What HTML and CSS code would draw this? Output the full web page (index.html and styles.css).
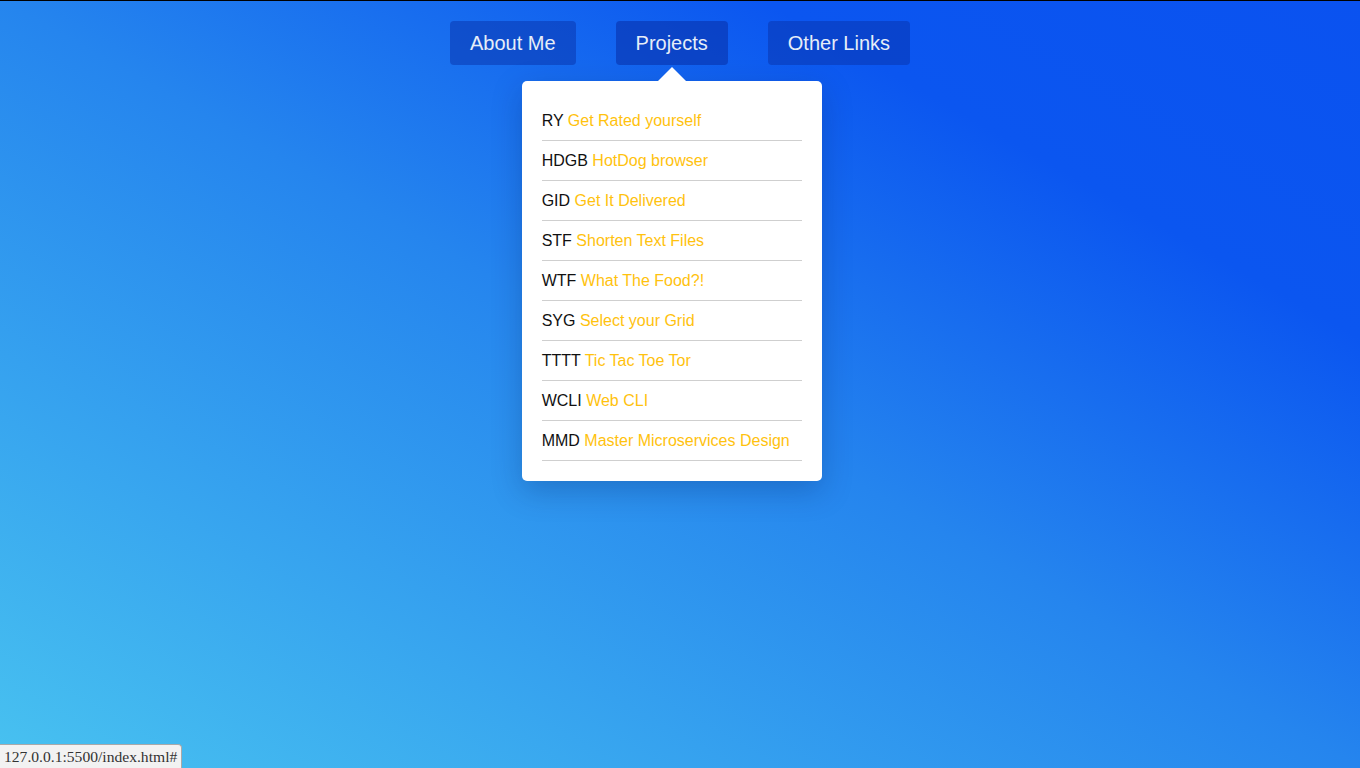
FILE: index.html
```html
<!DOCTYPE html>
<html lang="en">
<head>
<meta charset="utf-8">
<title>Projects</title>
<link rel="stylesheet" href="styles.css">
</head>
<body>
<nav class="nav">
  <div class="nav-item"><a class="nav-btn" href="#">About Me</a></div>
  <div class="nav-item open">
    <a class="nav-btn active" href="#">Projects</a>
    <div class="dropdown">
      <ul class="list">
        <li><span class="code">RY</span> <span class="name">Get Rated yourself</span></li>
        <li><span class="code">HDGB</span> <span class="name">HotDog browser</span></li>
        <li><span class="code">GID</span> <span class="name">Get It Delivered</span></li>
        <li><span class="code">STF</span> <span class="name">Shorten Text Files</span></li>
        <li><span class="code">WTF</span> <span class="name">What The Food?!</span></li>
        <li><span class="code">SYG</span> <span class="name">Select your Grid</span></li>
        <li><span class="code">TTTT</span> <span class="name">Tic Tac Toe Tor</span></li>
        <li><span class="code">WCLI</span> <span class="name">Web CLI</span></li>
        <li><span class="code">MMD</span> <span class="name">Master Microservices Design</span></li>
      </ul>
    </div>
  </div>
  <div class="nav-item"><a class="nav-btn" href="#">Other Links</a></div>
</nav>
<div class="status">127.0.0.1:5500/index.html#</div>
</body>
</html>
```
FILE: styles.css
```css
html, body {
  margin: 0;
  padding: 0;
  height: 100%;
}
body {
  border-top: 1px solid #000;
  box-sizing: border-box;
  min-height: 768px;
  background: linear-gradient(to top right, #48c2f0 0%, #2585ee 50%, #0b56f0 78%, #0a52f0 100%);
  font-family: "Liberation Sans", Arial, sans-serif;
  overflow: hidden;
}
.nav {
  display: flex;
  justify-content: center;
  gap: 40px;
  padding-top: 20px;
}
.nav-item {
  position: relative;
}
.nav-btn {
  display: block;
  height: 44px;
  line-height: 44px;
  padding: 0 20px;
  font-size: 20px;
  color: #e6edf8;
  text-decoration: none;
  background: rgba(8, 50, 170, 0.5);
  border-radius: 4px;
}
.nav-btn.active {
  background: rgba(8, 45, 165, 0.55);
}
.dropdown {
  position: absolute;
  top: 60px;
  left: 50%;
  transform: translateX(-50%);
  width: 300px;
  box-sizing: border-box;
  padding: 20px;
  background: #fff;
  border-radius: 5px;
  box-shadow: 0 10px 30px rgba(0, 30, 90, 0.25);
}
.dropdown::before {
  content: "";
  position: absolute;
  top: -14px;
  left: 50%;
  margin-left: -14px;
  border-left: 14px solid transparent;
  border-right: 14px solid transparent;
  border-bottom: 14px solid #fff;
}
.list {
  list-style: none;
  margin: 0;
  padding: 0;
}
.list li {
  height: 39px;
  line-height: 39px;
  border-bottom: 1px solid #cfcfcf;
  font-size: 16px;
  white-space: nowrap;
}
.code {
  color: #111;
}
.name {
  color: #ffc20e;
}
.status {
  position: fixed;
  left: 0;
  bottom: 0;
  height: 23px;
  line-height: 23px;
  padding: 0 4px;
  font-family: "Liberation Serif", serif;
  font-size: 15.6px;
  color: #333;
  background: #f2f2f2;
  border: 1px solid #a9a9a9;
  border-left: none;
  border-bottom: none;
  border-top-right-radius: 4px;
}
```
